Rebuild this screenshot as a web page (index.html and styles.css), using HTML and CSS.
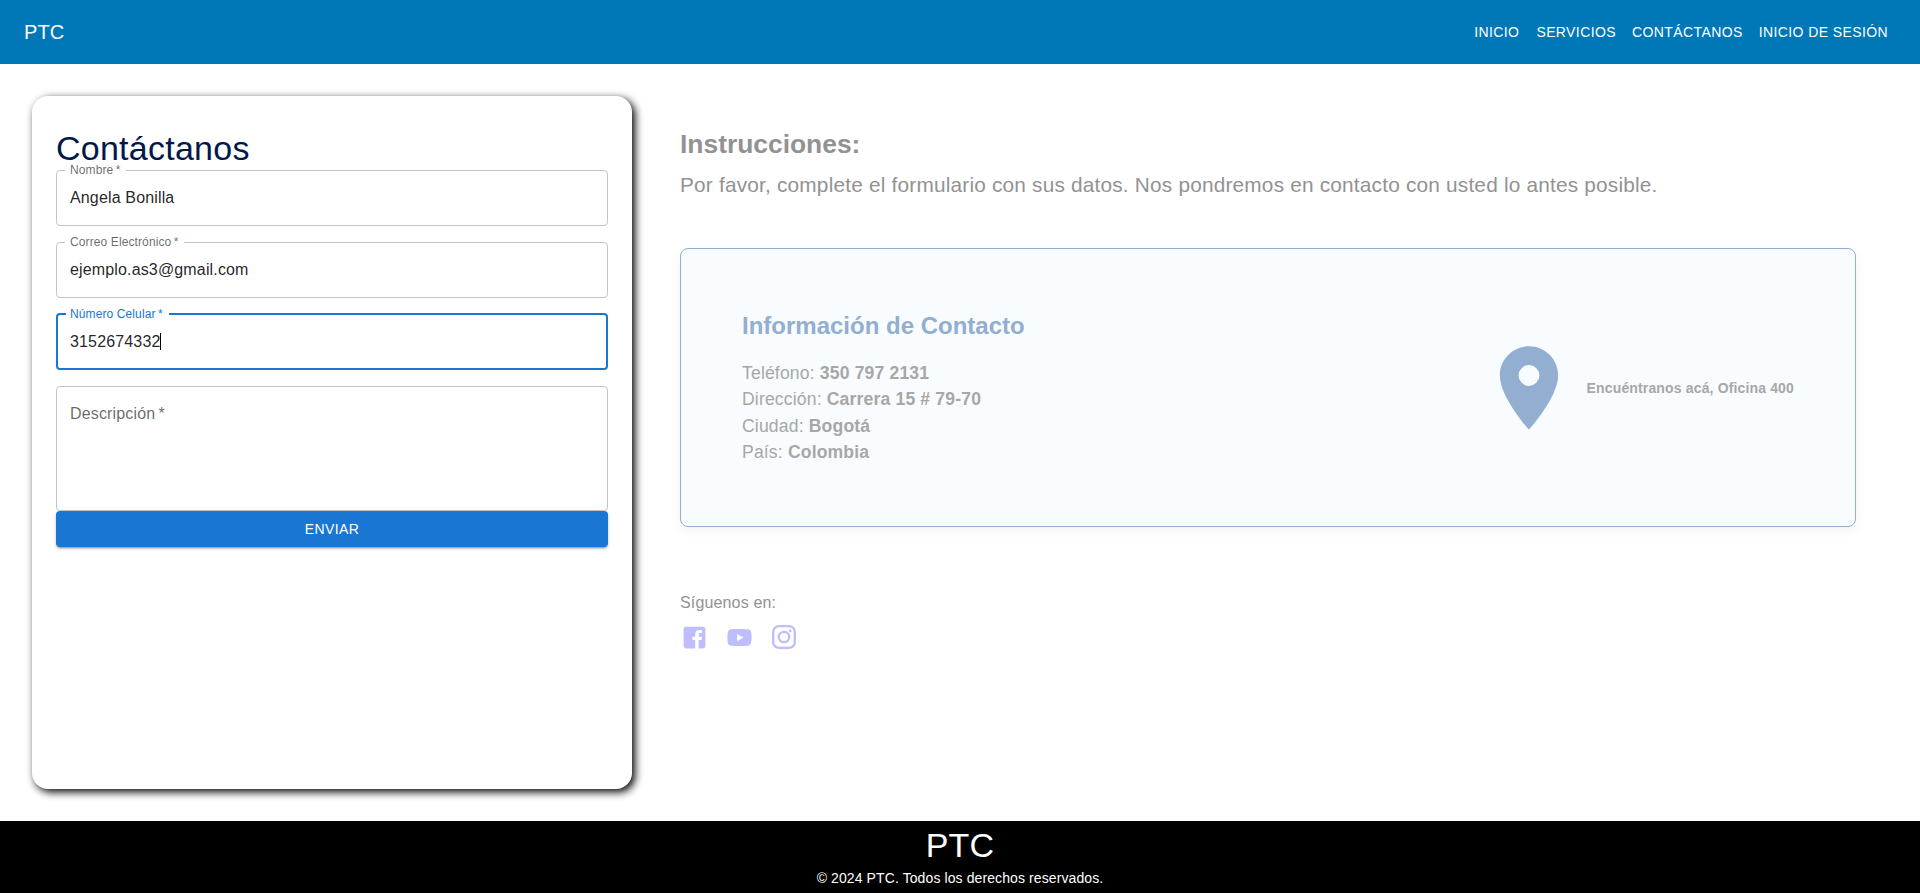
FILE: index.html
```html
<!DOCTYPE html>
<html lang="es">
<head>
<meta charset="utf-8">
<title>PTC - Contáctanos</title>
<link rel="stylesheet" href="styles.css">
</head>
<body>
<header class="navbar">
  <div class="brand">PTC</div>
  <nav class="nav-links">
    <a class="nav-link first">INICIO</a>
    <a class="nav-link">SERVICIOS</a>
    <a class="nav-link">CONTÁCTANOS</a>
    <a class="nav-link">INICIO DE SESIÓN</a>
  </nav>
</header>
<main class="main">
  <section class="form-card">
    <h1 class="form-title">Contáctanos</h1>
    <form class="form">
      <div class="field">
        <div class="value">Angela Bonilla</div>
        <fieldset class="outline"><legend class="legend"><span class="label">Nombre&thinsp;*</span></legend></fieldset>
      </div>
      <div class="field">
        <div class="value">ejemplo.as3@gmail.com</div>
        <fieldset class="outline"><legend class="legend"><span class="label">Correo Electrónico&thinsp;*</span></legend></fieldset>
      </div>
      <div class="field focused">
        <div class="value">3152674332<span class="caret"></span></div>
        <fieldset class="outline"><legend class="legend"><span class="label">Número Celular&thinsp;*</span></legend></fieldset>
      </div>
      <div class="field area">
        <div class="value placeholder">Descripción&thinsp;*</div>
        <fieldset class="outline"></fieldset>
      </div>
      <button class="submit" type="button">ENVIAR</button>
    </form>
  </section>
  <section class="info">
    <h2 class="info-title">Instrucciones:</h2>
    <p class="info-text">Por favor, complete el formulario con sus datos. Nos pondremos en contacto con usted lo antes posible.</p>
    <div class="contact-card">
      <div class="contact-data">
        <h3 class="contact-title">Información de Contacto</h3>
        <p class="contact-line">Teléfono: <strong>350 797 2131</strong></p>
        <p class="contact-line">Dirección: <strong>Carrera 15 # 79-70</strong></p>
        <p class="contact-line">Ciudad: <strong>Bogotá</strong></p>
        <p class="contact-line">País: <strong>Colombia</strong></p>
      </div>
      <div class="location">
        <svg class="pin" viewBox="0 0 24 24"><path d="M12 2C8.13 2 5 5.13 5 9c0 5.25 7 13 7 13s7-7.75 7-13c0-3.87-3.13-7-7-7zm0 9.5a2.5 2.5 0 0 1 0-5 2.5 2.5 0 0 1 0 5z"/></svg>
        <span class="location-text">Encuéntranos acá, Oficina 400</span>
      </div>
    </div>
    <p class="follow">Síguenos en:</p>
    <div class="socials">
      <svg class="social" viewBox="0 0 24 24"><path d="M19 3H5a2 2 0 0 0-2 2v14a2 2 0 0 0 2 2h7.615v-6.96h-2.338v-2.725h2.338v-2c0-2.325 1.42-3.592 3.5-3.592.699-.002 1.399.034 2.095.107v2.42h-1.435c-1.128 0-1.348.538-1.348 1.325v1.735h2.697l-.35 2.725h-2.348V21H19a2 2 0 0 0 2-2V5a2 2 0 0 0-2-2z"/></svg>
      <svg class="social" viewBox="0 0 24 24"><path d="M21.593 7.203a2.506 2.506 0 0 0-1.762-1.766C18.265 5.007 12 5 12 5s-6.264-.007-7.831.404a2.56 2.56 0 0 0-1.766 1.778c-.413 1.566-.417 4.814-.417 4.814s-.004 3.264.406 4.814c.23.857.905 1.534 1.763 1.765 1.582.43 7.83.437 7.83.437s6.265.007 7.831-.403a2.515 2.515 0 0 0 1.767-1.763c.414-1.565.417-4.812.417-4.812s.02-3.265-.407-4.831zM9.996 15.005l.005-6 5.207 3.005-5.212 2.995z"/></svg>
      <svg class="social line" viewBox="0 0 29 29"><rect x="3.2" y="3.2" width="21.6" height="21.6" rx="5.6"/><circle cx="14" cy="14" r="5.2"/><circle class="dot" cx="20.2" cy="7.9" r="1.4"/></svg>
    </div>
  </section>
</main>
<footer class="footer">
  <div class="footer-brand">PTC</div>
  <div class="footer-copy">© 2024 PTC. Todos los derechos reservados.</div>
</footer>
</body>
</html>
```

FILE: styles.css
```css
* { box-sizing: border-box; }
body {
  margin: 0;
  min-height: 100vh;
  display: flex;
  flex-direction: column;
  background: #fff;
  font-family: "Liberation Sans", Arial, sans-serif;
  font-size: 16px;
}
h1, h2, h3, p { margin: 0; }

.navbar {
  height: 64px;
  padding: 0 32px 0 24px;
  display: flex;
  align-items: center;
  justify-content: space-between;
  background: #0077b6;
  color: #fff;
}
.brand { font-size: 20px; line-height: 32px; letter-spacing: 0.15px; }
.nav-links { display: flex; gap: 16px; }
.nav-link { font-size: 14px; line-height: 24px; letter-spacing: 0.4px; }
.nav-link.first { margin-right: 1px; }

.main { flex: 1; display: flex; padding: 32px; gap: 48px; }
.form-card {
  width: 600px;
  padding: 31px 24px;
  border-radius: 16px;
  background: #fff;
  box-shadow: 3px 3px 8px #000;
}
.form-title {
  margin-bottom: 1px;
  font-size: 34px;
  font-weight: 400;
  line-height: 42px;
  letter-spacing: 0.25px;
  color: #03184a;
}
.form { display: flex; flex-direction: column; gap: 16px; }
.field { position: relative; height: 56px; padding: 15.5px 14px; }
.field.area { height: 125px; }
.value { line-height: 23px; letter-spacing: 0.15px; color: rgba(0, 0, 0, 0.87); }
.placeholder { color: rgba(0, 0, 0, 0.6); }
.caret {
  display: inline-block;
  width: 1px;
  height: 17px;
  background: #000;
  vertical-align: -3px;
}
/* The border is drawn by a fieldset so that its legend opens the notch. */
.outline {
  position: absolute;
  inset: -5px 0 0;
  margin: 0;
  padding: 0 8px;
  border: 1px solid #c4c4c4;
  border-radius: 4px;
}
.legend { height: 11px; padding: 0; display: block; }
.label {
  display: block;
  padding: 0 5px;
  font-size: 12px;
  line-height: 11px;
  letter-spacing: 0.11px;
  color: rgba(0, 0, 0, 0.6);
}
.area .outline { top: 0; }
.focused .outline { top: -6px; border: 2px solid #1976d2; padding: 0 8px; }
.focused .legend { height: 12px; }
.focused .label { padding: 0 6px 0 4px; line-height: 13px; color: #1976d2; }
.submit {
  height: 36px;
  margin-top: -16px;
  border: 0;
  border-radius: 4px;
  background: #1976d2;
  color: #fff;
  font-family: inherit;
  font-size: 14px;
  font-weight: 500;
  letter-spacing: 0.4px;
  box-shadow: 0 3px 1px -2px rgba(0,0,0,.2), 0 2px 2px 0 rgba(0,0,0,.14), 0 1px 5px 0 rgba(0,0,0,.12);
}

.info { flex: 1; padding: 32px 32px 0 0; color: #929292; }
.info-title { font-size: 26.4px; font-weight: 700; line-height: 32px; }
.info-text { margin-top: 9px; font-size: 20.8px; line-height: 31px; letter-spacing: 0.2px; }
.contact-card {
  height: 279px;
  margin-top: 48px;
  padding: 0 61px;
  display: flex;
  align-items: center;
  justify-content: space-between;
  border: 1px solid #8fb0d3;
  border-radius: 8px;
  background: #f8fcff;
  box-shadow: 0 4px 12px rgba(0, 0, 0, 0.05);
}
.contact-title { margin-bottom: 18px; font-size: 24px; line-height: 32px; color: #92aed0; }
.contact-line { font-size: 17.6px; line-height: 26.4px; letter-spacing: 0.15px; color: #a7a7a7; }
.location { display: flex; align-items: center; gap: 8px; }
.pin { width: 100px; height: 100px; fill: #92aed0; }
.location-text { font-size: 14px; font-weight: 700; letter-spacing: 0.15px; color: #a7a7a7; }
.follow { margin-top: 64px; line-height: 24px; letter-spacing: 0.15px; }
.socials { display: flex; gap: 16px; margin-top: 8px; }
.social { width: 29px; height: 29px; fill: #bebeff; }
.social.line { fill: none; stroke: #bebeff; stroke-width: 2.3; }
.social .dot { fill: #bebeff; stroke: none; }

.footer {
  height: 72px;
  display: flex;
  flex-direction: column;
  align-items: center;
  padding-top: 3px;
  background: #000;
  color: #fff;
}
.footer-brand { font-size: 34px; line-height: 42px; letter-spacing: 0.25px; }
.footer-copy { margin-top: 2px; font-size: 14px; line-height: 20px; letter-spacing: 0.1px; }
```
